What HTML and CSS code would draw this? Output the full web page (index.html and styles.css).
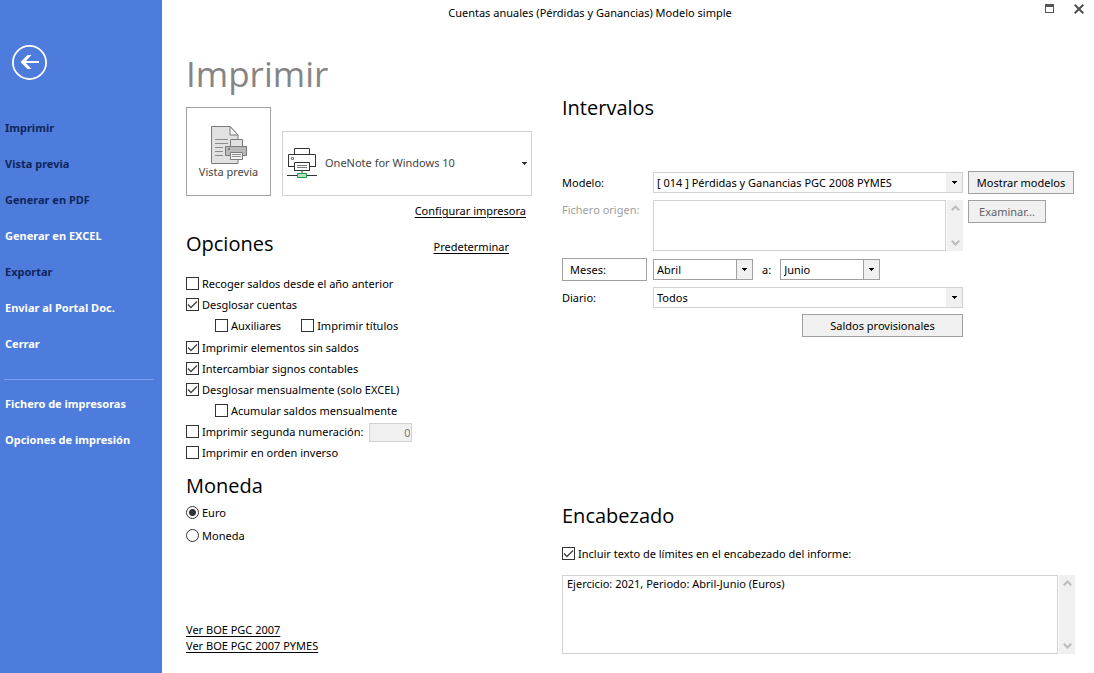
FILE: index.html
```html
<!DOCTYPE html>
<html lang="es">
<head>
<meta charset="utf-8">
<title>Cuentas anuales (Pérdidas y Ganancias) Modelo simple</title>
<meta name="viewport" content="width=device-width, initial-scale=1">
<link rel="stylesheet" href="styles.css">
</head>
<body>
<div class="app">
  <nav class="sidebar">
    <button class="back" type="button" aria-label="Volver">
      <svg width="36" height="36" viewBox="0 0 36 36"><circle cx="17.5" cy="17.5" r="16.6" fill="none" stroke="#fff" stroke-width="1.800"/><path d="M27 17H11" stroke="#fff" stroke-width="2"/><path d="M8.5 17l7-7h4l-6.500 7 6.500 7h-4z" fill="#fff"/></svg>
    </button>
    <button class="nav-item is-dark" type="button">Imprimir</button>
    <button class="nav-item is-dark" type="button">Vista previa</button>
    <button class="nav-item is-dark" type="button">Generar en PDF</button>
    <button class="nav-item" type="button">Generar en EXCEL</button>
    <button class="nav-item is-dark" type="button">Exportar</button>
    <button class="nav-item" type="button">Enviar al Portal Doc.</button>
    <button class="nav-item" type="button">Cerrar</button>
    <hr class="divider">
    <button class="nav-item" type="button">Fichero de impresoras</button>
    <button class="nav-item" type="button">Opciones de impresión</button>
  </nav>

  <div class="window">
    <header class="titlebar">
      <span class="titlebar-text">Cuentas anuales (Pérdidas y Ganancias) Modelo simple</span>
      <div class="window-controls">
        <button class="window-button" type="button" aria-label="Maximizar"><svg width="9" height="9" viewBox="0 0 9 9" shape-rendering="crispEdges"><path d="M0 0h9v9H0zM1 3v5h7V3z" fill="#555" fill-rule="evenodd"/></svg></button>
        <button class="window-button" type="button" aria-label="Cerrar ventana"><svg width="10" height="10" viewBox="0 0 10 10"><path d="M.7.7l8.600 8.600M9.300.7L.7 9.300" stroke="#505050" stroke-width="2"/></svg></button>
      </div>
    </header>

    <main class="content">
      <section class="column">
        <h1 class="title">Imprimir</h1>
        <div class="printer-row">
          <button class="preview" type="button">
            <svg width="36" height="38" viewBox="0 0 36 38">
              <path d="M.5.5h18.500l8 8.500v28.500H.5z" fill="#e1e1e1" stroke="#7b7b7b"/>
              <path d="M19 .5V9h8z" fill="#f6f6f6" stroke="#7b7b7b"/>
              <path d="M4 13.500h13M4 17.500h13M4 21.500h8M4 25.500h8M4 29.500h8" stroke="#8c8c8c"/>
              <path d="M19.500 13.500h12v7h-12z" fill="#e1e1e1" stroke="#7b7b7b"/>
              <path d="M14.500 20.500h21v9h-21z" fill="#b9b9b9" stroke="#7b7b7b"/>
              <path d="M17 22h2v2h-2z" fill="#7b7b7b"/>
              <path d="M19.500 26.500h12v7h-12z" fill="#f3f3f3" stroke="#7b7b7b"/>
              <path d="M21 28.500h9M21 30.500h9" stroke="#8c8c8c"/>
            </svg>
            <span>Vista previa</span>
          </button>
          <div class="printer">
            <select class="printer-select" aria-label="Impresora"><option>OneNote for Windows 10</option></select>
            <svg class="printer-icon" width="30" height="31" viewBox="0 0 30 31" fill="#fff" stroke="#333">
              <path d="M7.500.5h15v6h-15z"/>
              <path d="M1.500 6.500h27v16h-27z"/>
              <path d="M0 19h7v5H0zM23 19h7v5h-7z" stroke="none"/>
              <path d="M1 18.500h6.500M22.500 18.500H29"/>
              <path d="M4.500 9.500h2v2h-2z" stroke="#777"/>
              <path d="M7.500 14.500h15v8h-15z"/>
              <path d="M10 17.500h10M10 19.500h10" stroke="#777"/>
              <path d="M15 23v3" stroke="#999" stroke-width="2"/>
              <path d="M0 27.500h30"/>
              <path d="M10.500 25.500h9v4h-9z" fill="#b5e0bd" stroke="#15a045"/>
            </svg>
            <svg class="printer-arrow" width="5" height="3" viewBox="0 0 5 3" shape-rendering="crispEdges"><path d="M0 0h5v1H0zM1 1h3v1H1zM2 2h1v1H2z" fill="#333"/></svg>
          </div>
        </div>
        <a class="link setup-link" href="#">Configurar impresora</a>

        <div class="options-head">
          <h2 class="heading">Opciones</h2>
          <a class="link" href="#">Predeterminar</a>
        </div>
        <div class="options">
          <label class="check"><input type="checkbox">Recoger saldos desde el año anterior</label>
          <label class="check"><input type="checkbox" checked>Desglosar cuentas</label>
          <div class="sub-options split">
            <label class="check"><input type="checkbox">Auxiliares</label>
            <label class="check"><input type="checkbox">Imprimir títulos</label>
          </div>
          <label class="check"><input type="checkbox" checked>Imprimir elementos sin saldos</label>
          <label class="check"><input type="checkbox" checked>Intercambiar signos contables</label>
          <label class="check"><input type="checkbox" checked>Desglosar mensualmente (solo EXCEL)</label>
          <div class="sub-options">
            <label class="check"><input type="checkbox">Acumular saldos mensualmente</label>
          </div>
          <div class="numbering">
            <label class="check"><input type="checkbox">Imprimir segunda numeración:</label>
            <input class="number" type="text" value="0" disabled aria-label="Segunda numeración">
          </div>
          <label class="check"><input type="checkbox">Imprimir en orden inverso</label>
        </div>

        <h2 class="heading currency-heading">Moneda</h2>
        <div class="currency">
          <label class="check"><input type="radio" name="moneda" checked>Euro</label>
          <label class="check"><input type="radio" name="moneda">Moneda</label>
        </div>

        <div class="boe-links">
          <a class="link" href="#">Ver BOE PGC 2007</a>
          <a class="link" href="#">Ver BOE PGC 2007 PYMES</a>
        </div>
      </section>

      <section class="column column-right">
        <h2 class="heading">Intervalos</h2>
        <div class="form">
          <label for="modelo">Modelo:</label>
          <div class="select">
            <select id="modelo"><option>[ 014 ] Pérdidas y Ganancias PGC 2008 PYMES</option></select>
            <span class="arrow"><svg width="5" height="3" viewBox="0 0 5 3" shape-rendering="crispEdges"><path d="M0 0h5v1H0zM1 1h3v1H1zM2 2h1v1H2z"/></svg></span>
          </div>
          <button class="button models" type="button">Mostrar modelos</button>

          <label class="origin-label" for="origen">Fichero origen:</label>
          <div class="memo origin">
            <textarea id="origen" disabled></textarea>
            <div class="scroll">
              <svg width="9" height="6" viewBox="0 0 9 6"><path d="M.8 5.200L4.500 1.500l3.700 3.700"/></svg>
              <svg width="9" height="6" viewBox="0 0 9 6"><path d="M.8.8l3.700 3.700L8.200.8"/></svg>
            </div>
          </div>
          <button class="button browse" type="button" disabled>Examinar...</button>

          <button class="button period" type="button">Meses:</button>
          <div class="months">
            <div class="select boxed">
              <select id="desde" aria-label="Desde"><option>Abril</option></select>
              <span class="arrow"><svg width="5" height="3" viewBox="0 0 5 3" shape-rendering="crispEdges"><path d="M0 0h5v1H0zM1 1h3v1H1zM2 2h1v1H2z"/></svg></span>
            </div>
            <label for="hasta">a:</label>
            <div class="select boxed">
              <select id="hasta"><option>Junio</option></select>
              <span class="arrow"><svg width="5" height="3" viewBox="0 0 5 3" shape-rendering="crispEdges"><path d="M0 0h5v1H0zM1 1h3v1H1zM2 2h1v1H2z"/></svg></span>
            </div>
          </div>

          <label class="first" for="diario">Diario:</label>
          <div class="select">
            <select id="diario"><option>Todos</option></select>
            <span class="arrow"><svg width="5" height="3" viewBox="0 0 5 3" shape-rendering="crispEdges"><path d="M0 0h5v1H0zM1 1h3v1H1zM2 2h1v1H2z"/></svg></span>
          </div>
          <button class="button balances" type="button">Saldos provisionales</button>
        </div>

        <h2 class="heading header-heading">Encabezado</h2>
        <label class="check header-check"><input type="checkbox" checked>Incluir texto de límites en el encabezado del informe:</label>
        <div class="memo header-memo">
          <textarea aria-label="Texto del encabezado">Ejercicio: 2021, Periodo: Abril-Junio (Euros)</textarea>
          <div class="scroll">
            <svg width="9" height="6" viewBox="0 0 9 6"><path d="M.8 5.200L4.500 1.500l3.700 3.700"/></svg>
            <svg width="9" height="6" viewBox="0 0 9 6"><path d="M.8.8l3.700 3.700L8.200.8"/></svg>
          </div>
        </div>
      </section>
    </main>
  </div>
</div>
</body>
</html>
```
FILE: styles.css
```css
* {
  box-sizing: border-box;
}

body {
  margin: 0;
  background: #fff;
  color: #000;
  font: 11px/16px "Noto Sans", "Open Sans", sans-serif;
}

button,
input,
select,
textarea {
  margin: 0;
  font: inherit;
  color: inherit;
}

.app {
  display: grid;
  grid-template-columns: 162px 1fr;
  min-height: 100vh;
}

/* Sidebar */
.sidebar {
  display: flex;
  flex-direction: column;
  padding-top: 45px;
  background: #4d7cdc;
}

.back {
  display: flex;
  align-self: flex-start;
  margin: 0 0 29px 12px;
  padding: 0;
  border: 0;
  background: none;
}

.nav-item {
  height: 36px;
  padding: 0 5px;
  border: 0;
  background: none;
  color: #fff;
  font-weight: 700;
  text-align: left;
}

.nav-item.is-dark {
  color: #10265a;
}

.divider {
  height: 1px;
  margin: 17px 8px 6px 4px;
  border: 0;
  background: #7b9fee;
}

/* Title bar */
.window {
  display: flex;
  flex-direction: column;
}

.titlebar {
  display: flex;
  align-items: center;
  height: 26px;
}

.titlebar-text {
  flex: 1;
  text-align: center;
}

.window-controls {
  display: flex;
  justify-content: flex-end;
  gap: 20px;
  width: 76px;
  padding: 0 10px 8px 0;
}

.window-button {
  display: flex;
  padding: 0;
  border: 0;
  background: none;
}

/* Content */
.content {
  display: grid;
  grid-template-columns: 346px 1fr;
  gap: 30px;
  padding: 0 19px 18px 24px;
}

.column {
  display: flex;
  flex-direction: column;
}

.title {
  margin: 20px 0 5px;
  color: #858585;
  font: 400 35px/56px "Open Sans", "Noto Sans", sans-serif;
}

.heading {
  margin: 0;
  font: 400 20px/28px "Open Sans", "Noto Sans", sans-serif;
}

.link {
  color: #000;
  text-decoration: underline;
  text-underline-offset: 2px;
}

.printer-row {
  display: grid;
  grid-template-columns: 85px 1fr;
  align-items: end;
  gap: 11px;
}

.preview {
  display: flex;
  flex-direction: column;
  align-items: center;
  height: 89px;
  padding: 18px 0 0;
  border: 1px solid #a0a0a0;
  background: #fff;
  color: #444;
}

.printer {
  display: grid;
  align-items: center;
}

.printer-select,
.printer-icon,
.printer-arrow {
  grid-area: 1 / 1;
}

.printer-select {
  width: 100%;
  height: 65px;
  padding: 0 20px 2px 42px;
  appearance: none;
  border: 1px solid #d2d2d2;
  border-radius: 0;
  background: #fff;
  color: #444;
}

.printer-icon {
  margin-left: 5px;
  pointer-events: none;
}

.printer-arrow {
  justify-self: end;
  margin-right: 5px;
  pointer-events: none;
}

.setup-link {
  align-self: flex-end;
  margin: 7px 6px 11px 0;
}

.options-head {
  display: flex;
  align-items: flex-end;
  justify-content: space-between;
  padding-right: 23px;
}

.options-head .link {
  margin-bottom: 3px;
}

.options {
  display: flex;
  flex-direction: column;
  margin-top: 15px;
}

.check {
  display: flex;
  align-items: center;
  gap: 3px;
  height: 21px;
}

.check input {
  flex: none;
  width: 13px;
  height: 13px;
  appearance: none;
  border: 1px solid #333;
  background: #fff center / 11px 11px no-repeat;
}

.check input[type="checkbox"]:checked {
  background-image: url("data:image/svg+xml,%3Csvg xmlns='http://www.w3.org/2000/svg' viewBox='0 0 11 11'%3E%3Cpath d='M1 5.5l3 3 6-6' fill='none' stroke='%23444' stroke-width='1.4'/%3E%3C/svg%3E");
}

.check input[type="radio"] {
  border-radius: 50%;
}

.check input[type="radio"]:checked {
  background-image: radial-gradient(circle, #333 3px, transparent 4px);
}

.sub-options {
  display: flex;
  gap: 20px;
  padding-left: 29px;
}

.split {
  margin-bottom: 1px;
}

.numbering {
  display: flex;
  gap: 6px;
  height: 21px;
}

.number {
  width: 43px;
  height: 19px;
  margin-top: 2px;
  padding: 0 1px;
  border: 1px solid #d2d2d2;
  background: #f0f0f0;
  color: #777;
  text-align: right;
}

.currency-heading {
  margin-top: 9px;
}

.currency {
  display: grid;
  gap: 2px;
  margin-top: 2px;
}

.boe-links {
  display: flex;
  flex-direction: column;
  align-items: flex-start;
  margin-top: 76px;
}

/* Interval form */
.column-right {
  padding-top: 68px;
}

.form {
  display: grid;
  grid-template-columns: 91px 1fr 107px;
  align-items: center;
  gap: 6px 0;
  margin-top: 49px;
}

.select {
  display: grid;
  align-items: center;
  margin-right: 5px;
}

.select select {
  grid-area: 1 / 1;
  width: 100%;
  height: 21px;
  padding: 0 18px 0 3px;
  appearance: none;
  border: 1px solid #d2d2d2;
  border-radius: 0;
  background: #fff;
}

.arrow {
  display: flex;
  grid-area: 1 / 1;
  align-items: center;
  justify-content: center;
  justify-self: end;
  width: 16px;
  height: 19px;
  margin-right: 1px;
  background: #f0f0f0;
  pointer-events: none;
}

.boxed {
  width: 100px;
  margin: 0;
}

.boxed select {
  border-color: #a0a0a0;
}

.boxed .arrow {
  border-left: 1px solid #a0a0a0;
}

.button {
  height: 23px;
  padding: 0 6px;
  border: 1px solid #a0a0a0;
  background: #f0f0f0;
  white-space: nowrap;
}

.models {
  width: 106px;
}

.browse {
  align-self: start;
  justify-self: start;
  width: 78px;
}

.button:disabled {
  color: #606060;
}

.origin-label {
  align-self: start;
  padding-top: 2px;
  color: #a0a0a0;
}

.memo {
  display: flex;
  gap: 1px;
}

.memo textarea {
  flex: 1;
  min-width: 0;
  padding: 0 4px;
  border: 1px solid #d2d2d2;
  background: #fff;
  resize: none;
}

.origin {
  height: 51px;
  margin: 0 5px 1px 0;
}

.scroll {
  display: flex;
  flex-direction: column;
  align-items: center;
  justify-content: space-between;
  width: 16px;
  padding: 5px 0;
  background: #f0f0f0;
}

.scroll path {
  fill: none;
  stroke: #bcbcbc;
  stroke-width: 2;
}

.period {
  width: 85px;
  padding-left: 7px;
  background: #fff;
  text-align: left;
}

.months {
  display: flex;
  align-items: center;
  gap: 9px;
}

.first {
  grid-column: 1;
}

.balances {
  grid-column: 2;
  justify-self: end;
  width: 161px;
  margin-right: 5px;
}

.header-heading {
  margin-top: 165px;
}

.header-check {
  margin-top: 13px;
}

.header-memo {
  height: 79px;
  margin-top: 11px;
}
```
